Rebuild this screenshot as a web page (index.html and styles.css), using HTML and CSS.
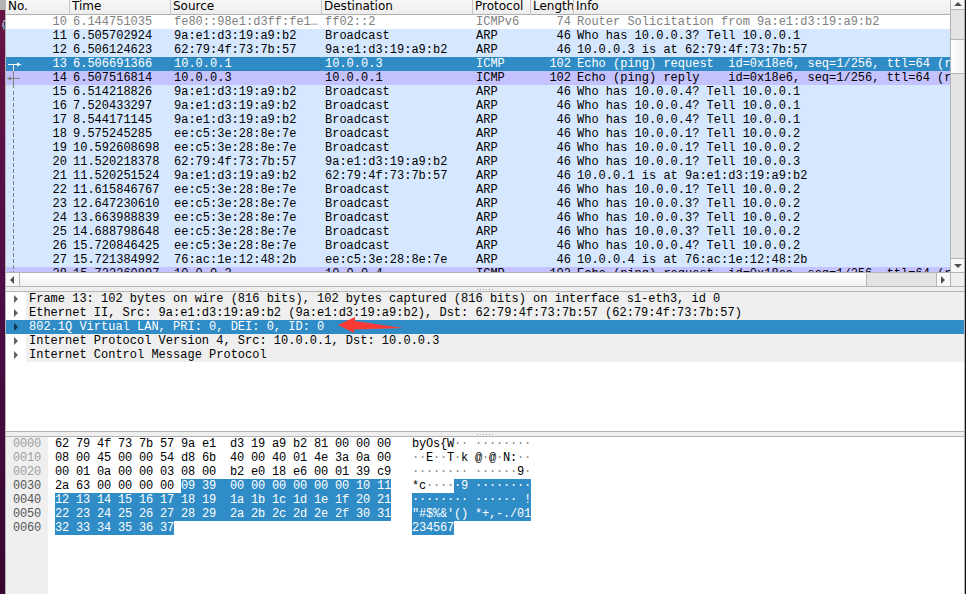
FILE: index.html
```
<!DOCTYPE html>
<html lang="en">

<head>
    <meta charset="UTF-8">
    <meta name="viewport" content="width=device-width, initial-scale=1.0">
    <title>s1-eth3</title>
    <link rel="stylesheet" href="styles.css">
</head>

<body>
    <svg class="desktop-icon" width="4" height="12" viewBox="0 0 4 12">
        <path d="M2 1H4V3H3V6H4V8H3V11H2V8H1V4H2Z" fill="#8f8fa6" />
        <path d="M3 6H4V10H3Z" fill="#3a6fa8" />
    </svg>
    <main class="window">
        <section class="packet-pane">
            <div class="packet-view">
                <div class="packet-list">
                    <table class="packets">
                        <colgroup>
                            <col class="col-no">
                            <col class="col-time">
                            <col class="col-addr">
                            <col class="col-addr">
                            <col class="col-protocol">
                            <col class="col-length">
                            <col>
                        </colgroup>
                        <thead>
                            <tr>
                                <th>No.</th>
                                <th>Time</th>
                                <th>Source</th>
                                <th>Destination</th>
                                <th>Protocol</th>
                                <th>Length</th>
                                <th>Info</th>
                            </tr>
                        </thead>
                        <tbody id="packets"></tbody>
                    </table>
                    <svg class="related" width="16" height="257" viewBox="0 0 16 257" shape-rendering="crispEdges">
                        <path d="M2 7.5H12M7.5 7V14" stroke="#fff" fill="none" />
                        <path d="M11 5.5L15.5 7.5L11 9.5Z" fill="#fff" shape-rendering="auto" />
                        <path d="M3 21.5H14M7.5 14V31" stroke="#808080" fill="none" />
                        <path d="M5 19.5L0.5 21.5L5 23.5Z" fill="#808080" shape-rendering="auto" />
                        <path d="M7.5 34V257" stroke="#808080" stroke-dasharray="4 2" fill="none" />
                    </svg>
                </div>
                <div class="vscroll">
                    <button class="arrow up" aria-label="Scroll up"></button>
                    <div class="vtrack">
                        <div class="vthumb"></div>
                    </div>
                    <button class="arrow down" aria-label="Scroll down"></button>
                </div>
            </div>
            <div class="hscroll">
                <button class="arrow left" aria-label="Scroll left"></button>
                <div class="htrack">
                    <div class="hthumb"></div>
                </div>
                <button class="arrow right" aria-label="Scroll right"></button>
                <div class="corner"></div>
            </div>
        </section>

        <div class="splitter"><i></i><i></i><i></i><i></i><i></i><i></i></div>

        <section class="detail-pane">
            <ul class="tree">
                <li><span>Frame 13: 102 bytes on wire (816 bits), 102 bytes captured (816 bits) on interface s1-eth3, id 0</span></li>
                <li><span>Ethernet II, Src: 9a:e1:d3:19:a9:b2 (9a:e1:d3:19:a9:b2), Dst: 62:79:4f:73:7b:57 (62:79:4f:73:7b:57)</span></li>
                <li class="current"><span>802.1Q Virtual LAN, PRI: 0, DEI: 0, ID: 0</span>
                    <svg class="pointer" width="65" height="17" viewBox="0 0 65 17">
                        <path d="M0 8L17 0V4L65 11L16 12.5V16Z" fill="#fd3b36" />
                    </svg>
                </li>
                <li><span>Internet Protocol Version 4, Src: 10.0.0.1, Dst: 10.0.0.3</span></li>
                <li><span>Internet Control Message Protocol</span></li>
            </ul>
        </section>

        <div class="splitter"><i></i><i></i><i></i><i></i><i></i><i></i></div>

        <section class="byte-pane" id="bytes"></section>
    </main>

    <script src="script.js"></script>
</body>

</html>
```

FILE: styles.css
```
* {
    margin: 0;
    padding: 0;
    box-sizing: border-box;
}

body {
    height: 100vh;
    padding-left: 5px;
    border-right: 1px solid #1c0d18;
    background: linear-gradient(#b4b2b1 10px, #661445 10px, #4b0d45 50%, #38062f);
    font: 12px/14px "Liberation Mono", monospace;
    color: #000;
    overflow: hidden;
}

.desktop-icon {
    position: absolute;
    left: 1px;
    top: 19px;
}

.window {
    display: flex;
    flex-direction: column;
    height: 100%;
    border: 1px solid #b4b4b4;
    border-width: 0 1px;
    background: #efefef;
}

/* packet list */
.packet-view {
    display: flex;
    height: 273px;
    border-bottom: 1px solid #b4b4b4;
}

.packet-list {
    position: relative;
    flex: 1;
    min-width: 0;
    overflow: hidden;
    background: #fff;
}

.packets {
    width: 100%;
    table-layout: fixed;
    border-collapse: separate;
    border-spacing: 0;
}

.col-no {
    width: 64px;
}

.col-time {
    width: 101px;
}

.col-addr {
    width: 151px;
}

.col-protocol {
    width: 58px;
}

.col-length {
    width: 43px;
}

.packets th {
    height: 15px;
    padding: 0 0 2px 2px;
    border-right: 1px solid #c6c6c6;
    border-bottom: 1px solid #b0b0b0;
    background: linear-gradient(#f8f8f8, #ededed);
    font: 12px/12px "DejaVu Sans", sans-serif;
    text-align: left;
    white-space: nowrap;
    overflow: hidden;
}

.packets th:last-child {
    border-right: 0;
}

.packets td {
    height: 14px;
    padding: 0 3px;
    white-space: pre;
    overflow: hidden;
}

.packets td:last-child {
    padding-right: 0;
}

.packets .num {
    text-align: right;
}

.arp {
    background: #d6e8ff;
}

.icmp {
    background: #c4c2ff;
}

.icmpv6 {
    color: #808080;
}

.packets .selected {
    background: #308cc6;
    color: #fff;
}

.selected td:nth-child(3) {
    border-radius: 2px;
    box-shadow: inset 0 0 0 1px #2a7db1;
}

.related {
    position: absolute;
    left: 0;
    top: 57px;
}

/* scroll bars */
.vscroll {
    display: flex;
    flex-direction: column;
    width: 14px;
    border-left: 1px solid #b4b4b4;
    background: #e3e3e3;
}

.vtrack {
    flex: 1;
    padding-top: 29px;
}

.vthumb {
    height: 35px;
    border: 1px solid #b4b4b4;
    border-width: 1px 0;
    background: linear-gradient(90deg, #fff, #f0f0f0);
}

.arrow {
    display: flex;
    align-items: center;
    justify-content: center;
    flex: none;
    width: 13px;
    height: 13px;
    border: 0;
    background: #f8f8f8;
}

.arrow::before {
    content: "";
    border: 4px solid transparent;
}

.up {
    height: 10px;
    padding-bottom: 2px;
    border-bottom: 1px solid #b4b4b4;
}

.up::before {
    border-top: 0;
    border-bottom-color: #505050;
}

.down {
    height: 14px;
    border-top: 1px solid #b4b4b4;
}

.down::before {
    border-bottom: 0;
    border-top-color: #505050;
}

.hscroll {
    display: flex;
    height: 14px;
    border-bottom: 1px solid #b4b4b4;
    background: #e3e3e3;
}

.left {
    width: 14px;
    padding-right: 2px;
    border-right: 1px solid #b4b4b4;
}

.left::before {
    border-left: 0;
    border-right-color: #505050;
}

.htrack {
    flex: 1;
}

.hthumb {
    width: calc(100% - 69px);
    height: 100%;
    border-right: 1px solid #b4b4b4;
    background: linear-gradient(#fff, #f2f2f2);
}

.right {
    width: 14px;
    padding-right: 2px;
    border-left: 1px solid #b4b4b4;
}

.right::before {
    border-right: 0;
    border-left-color: #505050;
}

.corner {
    width: 14px;
    border-left: 1px solid #b4b4b4;
    background: #efefef;
}

/* handles between the panes */
.splitter {
    display: flex;
    align-items: center;
    justify-content: center;
    gap: 2px;
    flex: none;
    height: 5px;
    border-bottom: 1px solid #b4b4b4;
}

.splitter i {
    width: 1px;
    height: 1px;
    background: #a8a8a8;
}

/* packet details */
.detail-pane {
    height: 140px;
    border-bottom: 1px solid #b4b4b4;
    background: #fff;
}

.tree {
    list-style: none;
}

.tree li {
    display: flex;
    align-items: center;
    height: 14px;
    padding-left: 8px;
    white-space: nowrap;
    background: linear-gradient(90deg, #fff 20px, #efefef 20px);
}

.tree li::before {
    content: "";
    margin-right: 11px;
    border: 4px solid transparent;
    border-left-color: #606060;
    border-right: 0;
}

.tree .current {
    position: relative;
    background: #308cc6;
    color: #fff;
}

.tree .current::before {
    border-left-color: #12364d;
}

.pointer {
    position: absolute;
    left: 332px;
    top: -3px;
}

/* packet bytes */
.byte-pane {
    flex: 1;
    background: linear-gradient(90deg, #efefef 42px, #fff 42px);
}

.line {
    display: flex;
    height: 14px;
}

.offset {
    width: 49px;
    padding-left: 7px;
    color: #555;
}

.offset.dim {
    color: #a0a0a0;
}

.cells {
    display: grid;
    grid-auto-columns: 7px;
    grid-auto-flow: column;
}

.hex {
    width: 357px;
}

.cells .on {
    background: #308cc6;
    color: #fff;
}

.dot {
    color: #888;
}
```

FILE: script.js
```
var A = '9a:e1:d3:19:a9:b2';
var B = '62:79:4f:73:7b:57';
var C = 'ee:c5:3e:28:8e:7e';
var D = '76:ac:1e:12:48:2b';
var all = 'Broadcast';

var packets = [
    [10, '6.144751035', 'fe80::98e1:d3ff:fe1…', 'ff02::2', 'ICMPv6', 74, 'Router Solicitation from ' + A],
    [11, '6.505702924', A, all, 'ARP', 46, 'Who has 10.0.0.3? Tell 10.0.0.1'],
    [12, '6.506124623', B, A, 'ARP', 46, '10.0.0.3 is at ' + B],
    [13, '6.506691366', '10.0.0.1', '10.0.0.3', 'ICMP', 102, 'Echo (ping) request  id=0x18e6, seq=1/256, ttl=64 (r'],
    [14, '6.507516814', '10.0.0.3', '10.0.0.1', 'ICMP', 102, 'Echo (ping) reply    id=0x18e6, seq=1/256, ttl=64 (r'],
    [15, '6.514218826', A, all, 'ARP', 46, 'Who has 10.0.0.4? Tell 10.0.0.1'],
    [16, '7.520433297', A, all, 'ARP', 46, 'Who has 10.0.0.4? Tell 10.0.0.1'],
    [17, '8.544171145', A, all, 'ARP', 46, 'Who has 10.0.0.4? Tell 10.0.0.1'],
    [18, '9.575245285', C, all, 'ARP', 46, 'Who has 10.0.0.1? Tell 10.0.0.2'],
    [19, '10.592608698', C, all, 'ARP', 46, 'Who has 10.0.0.1? Tell 10.0.0.2'],
    [20, '11.520218378', B, A, 'ARP', 46, 'Who has 10.0.0.1? Tell 10.0.0.3'],
    [21, '11.520251524', A, B, 'ARP', 46, '10.0.0.1 is at ' + A],
    [22, '11.615846767', C, all, 'ARP', 46, 'Who has 10.0.0.1? Tell 10.0.0.2'],
    [23, '12.647230610', C, all, 'ARP', 46, 'Who has 10.0.0.3? Tell 10.0.0.2'],
    [24, '13.663988839', C, all, 'ARP', 46, 'Who has 10.0.0.3? Tell 10.0.0.2'],
    [25, '14.688798648', C, all, 'ARP', 46, 'Who has 10.0.0.3? Tell 10.0.0.2'],
    [26, '15.720846425', C, all, 'ARP', 46, 'Who has 10.0.0.4? Tell 10.0.0.2'],
    [27, '15.721384992', D, C, 'ARP', 46, '10.0.0.4 is at ' + D],
    [28, '15.722260897', '10.0.0.2', '10.0.0.4', 'ICMP', 102, 'Echo (ping) request  id=0x18ea, seq=1/256, ttl=64 (r']
];

var tbody = document.getElementById('packets');
for (var i = 0; i < packets.length; i++) {
    var tr = document.createElement('tr');
    tr.className = packets[i][4].toLowerCase() + (packets[i][0] == 13 ? ' selected' : '');
    for (var j = 0; j < packets[i].length; j++) {
        var td = document.createElement('td');
        td.textContent = packets[i][j];
        if (j == 0 || j == 5) {
            td.className = 'num';
        }
        tr.appendChild(td);
    }
    tbody.appendChild(tr);
}

// offset, hex, ascii, then the highlighted range [from, to) in each column
var lines = [
    ['0000', '62 79 4f 73 7b 57 9a e1  d3 19 a9 b2 81 00 00 00', 'byOs{W·· ········', 0, 0, 0, 0],
    ['0010', '08 00 45 00 00 54 d8 6b  40 00 40 01 4e 3a 0a 00', '··E··T·k @·@·N:··', 0, 0, 0, 0],
    ['0020', '00 01 0a 00 00 03 08 00  b2 e0 18 e6 00 01 39 c9', '········ ······9·', 0, 0, 0, 0],
    ['0030', '2a 63 00 00 00 00 09 39  00 00 00 00 00 00 10 11', '*c·····9 ········', 18, 48, 6, 17],
    ['0040', '12 13 14 15 16 17 18 19  1a 1b 1c 1d 1e 1f 20 21', '········ ······ !', 0, 48, 0, 17],
    ['0050', '22 23 24 25 26 27 28 29  2a 2b 2c 2d 2e 2f 30 31', '"#$%&\'() *+,-./01', 0, 48, 0, 17],
    ['0060', '32 33 34 35 36 37', '234567', 0, 17, 0, 6]
];

function cells(name, text, from, to) {
    var box = document.createElement('div');
    box.className = 'cells ' + name;
    for (var i = 0; i < text.length; i++) {
        var span = document.createElement('span');
        span.textContent = text[i];
        if (i >= from && i < to) {
            span.className = 'on';
        } else if (text[i] == '·') {
            span.className = 'dot';
        }
        box.appendChild(span);
    }
    return box;
}

var bytes = document.getElementById('bytes');
for (var i = 0; i < lines.length; i++) {
    var line = document.createElement('div');
    line.className = 'line';
    line.appendChild(cells('offset' + (i < 3 ? ' dim' : ''), lines[i][0], 0, 0));
    line.appendChild(cells('hex', lines[i][1], lines[i][3], lines[i][4]));
    line.appendChild(cells('ascii', lines[i][2], lines[i][5], lines[i][6]));
    bytes.appendChild(line);
}
```
